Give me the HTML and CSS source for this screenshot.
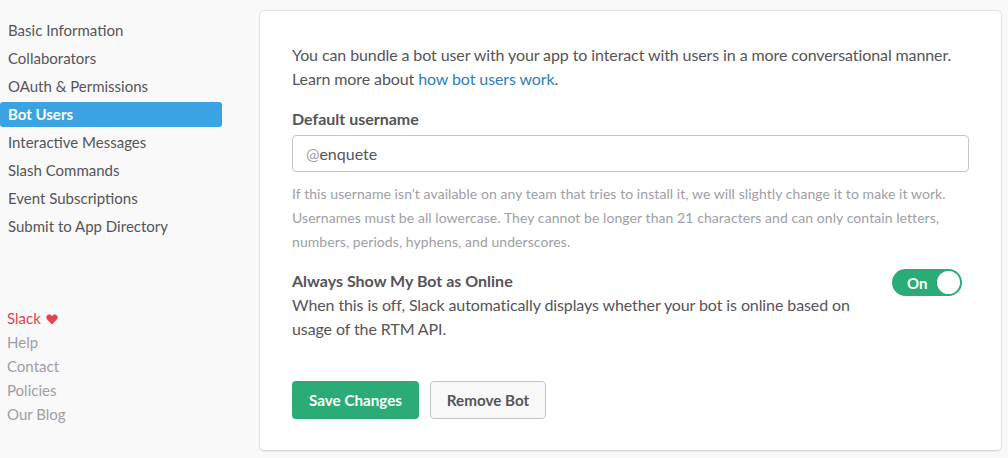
FILE: index.html
```html
<!DOCTYPE html>
<html>
<head>
<meta charset="utf-8">
<link rel="stylesheet" href="styles.css">
</head>
<body>
<div class="page">
  <nav class="sidebar">
    <ul class="nav">
      <li><a>Basic Information</a></li>
      <li><a>Collaborators</a></li>
      <li><a>OAuth &amp; Permissions</a></li>
      <li><a class="active">Bot Users</a></li>
      <li><a>Interactive Messages</a></li>
      <li><a>Slash Commands</a></li>
      <li><a>Event Subscriptions</a></li>
      <li><a>Submit to App Directory</a></li>
    </ul>
    <ul class="footer">
      <li class="slack">Slack <svg class="heart" viewBox="0 0 12 11" width="12" height="11"><path d="M6 10.5 L1.2 5.6 C-0.2 4.1 0.2 1.6 2 0.8 C3.4 0.2 5 0.8 6 2.2 C7 0.8 8.6 0.2 10 0.8 C11.8 1.6 12.2 4.1 10.8 5.6 Z" fill="#e8404f"/></svg></li>
      <li>Help</li>
      <li>Contact</li>
      <li>Policies</li>
      <li>Our Blog</li>
    </ul>
  </nav>
  <main class="card">
    <p class="intro">You can bundle a bot user with your app to interact with users in a more conversational manner. Learn more about <a class="link">how bot users work</a>.</p>
    <label class="label">Default username</label>
    <div class="input"><span class="at">@</span>enquete</div>
    <p class="help">If this username isn’t available on any team that tries to install it, we will slightly change it to make it work. Usernames must be all lowercase. They cannot be longer than 21 characters and can only contain letters, numbers, periods, hyphens, and underscores.</p>
    <div class="setting">
      <div class="setting-text">
        <div class="setting-title">Always Show My Bot as Online</div>
        <div class="setting-desc">When this is off, Slack automatically displays whether your bot is online based on usage of the RTM API.</div>
      </div>
      <div class="toggle"><span class="toggle-label">On</span><span class="knob"></span></div>
    </div>
    <div class="actions">
      <button class="btn btn-primary">Save Changes</button>
      <button class="btn btn-outline">Remove Bot</button>
    </div>
  </main>
</div>
</body>
</html>
```

FILE: styles.css
```css
* { box-sizing: border-box; }
html, body {
  margin: 0;
  padding: 0;
  background: #f9f9f9;
  font-family: Lato, "Open Sans", sans-serif;
  color: #555459;
}
.page {
  display: flex;
  align-items: flex-start;
  height: 458px;
}
.sidebar {
  width: 259px;
  flex: none;
  padding-top: 16px;
}
ul { list-style: none; margin: 0; padding: 0; }
.nav { width: 222px; }
.nav li { height: 28px; display: flex; align-items: center; }
.nav a {
  display: block;
  width: 100%;
  height: 25px;
  line-height: 25px;
  padding-left: 8px;
  font-size: 15px;
  color: #555459;
  border-radius: 3px;
}
.nav a.active {
  background: #3aa3e3;
  color: #fff;
  font-weight: 700;
}
.footer {
  margin-top: 66px;
  padding-left: 7px;
}
.footer li {
  font-size: 15px;
  line-height: 24px;
  color: #9e9ea6;
}
.footer .slack { color: #e8404f; }
.heart { vertical-align: -1px; margin-left: 1px; }
.card {
  flex: 1;
  margin: 10px 6px 0 0;
  height: 441px;
  background: #fff;
  border: 1px solid #e3e3e3;
  border-bottom-color: #d6d6d6;
  border-radius: 5px;
  box-shadow: 0 1px 1px rgba(0,0,0,0.06);
  padding: 32px 32px 0 32px;
}
.intro {
  margin: 0;
  font-size: 16px;
  letter-spacing: -0.1px;
  line-height: 24px;
  color: #555459;
}
.link { color: #2a80b9; text-decoration: none; }
.label {
  display: block;
  margin-top: 16px;
  font-size: 16px;
  font-weight: 700;
  line-height: 24px;
}
.input {
  margin-top: 4px;
  height: 37px;
  border: 1px solid #c5c5c5;
  border-radius: 4px;
  padding: 0 13px;
  font-size: 16px;
  line-height: 35px;
  color: #555459;
}
.at { color: #9e9ea6; }
.help {
  margin: 10px 0 0;
  font-size: 14px;
  letter-spacing: 0.07px;
  line-height: 24px;
  color: #9e9ea6;
}
.setting {
  margin-top: 15px;
  display: flex;
  justify-content: space-between;
  align-items: flex-start;
}
.setting-text { width: 580px; }
.setting-title {
  font-size: 16px;
  font-weight: 700;
  line-height: 24px;
}
.setting-desc {
  font-size: 16px;
  letter-spacing: -0.1px;
  line-height: 24px;
}
.toggle {
  margin-top: 0;
  margin-right: 7px;
  width: 70px;
  height: 27px;
  border-radius: 14px;
  background: #2bac76;
  display: flex;
  align-items: center;
  padding: 0 2px 0 15px;
  justify-content: space-between;
}
.toggle-label {
  color: #fff;
  font-weight: 700;
  font-size: 15px;
}
.knob {
  width: 23px;
  height: 23px;
  border-radius: 50%;
  background: #fff;
}
.actions {
  margin-top: 40px;
  display: flex;
  gap: 11px;
}
.btn {
  font-family: Lato, "Open Sans", sans-serif;
  font-size: 15.2px;
  font-weight: 700;
  height: 38px;
  border-radius: 4px;
  cursor: pointer;
}
.btn-primary {
  width: 127px;
  background: #2bac76;
  color: #fff;
  border: none;
}
.btn-outline {
  width: 116px;
  background: #f9f9f9;
  color: #555459;
  border: 1px solid #c5c5c5;
}
```
